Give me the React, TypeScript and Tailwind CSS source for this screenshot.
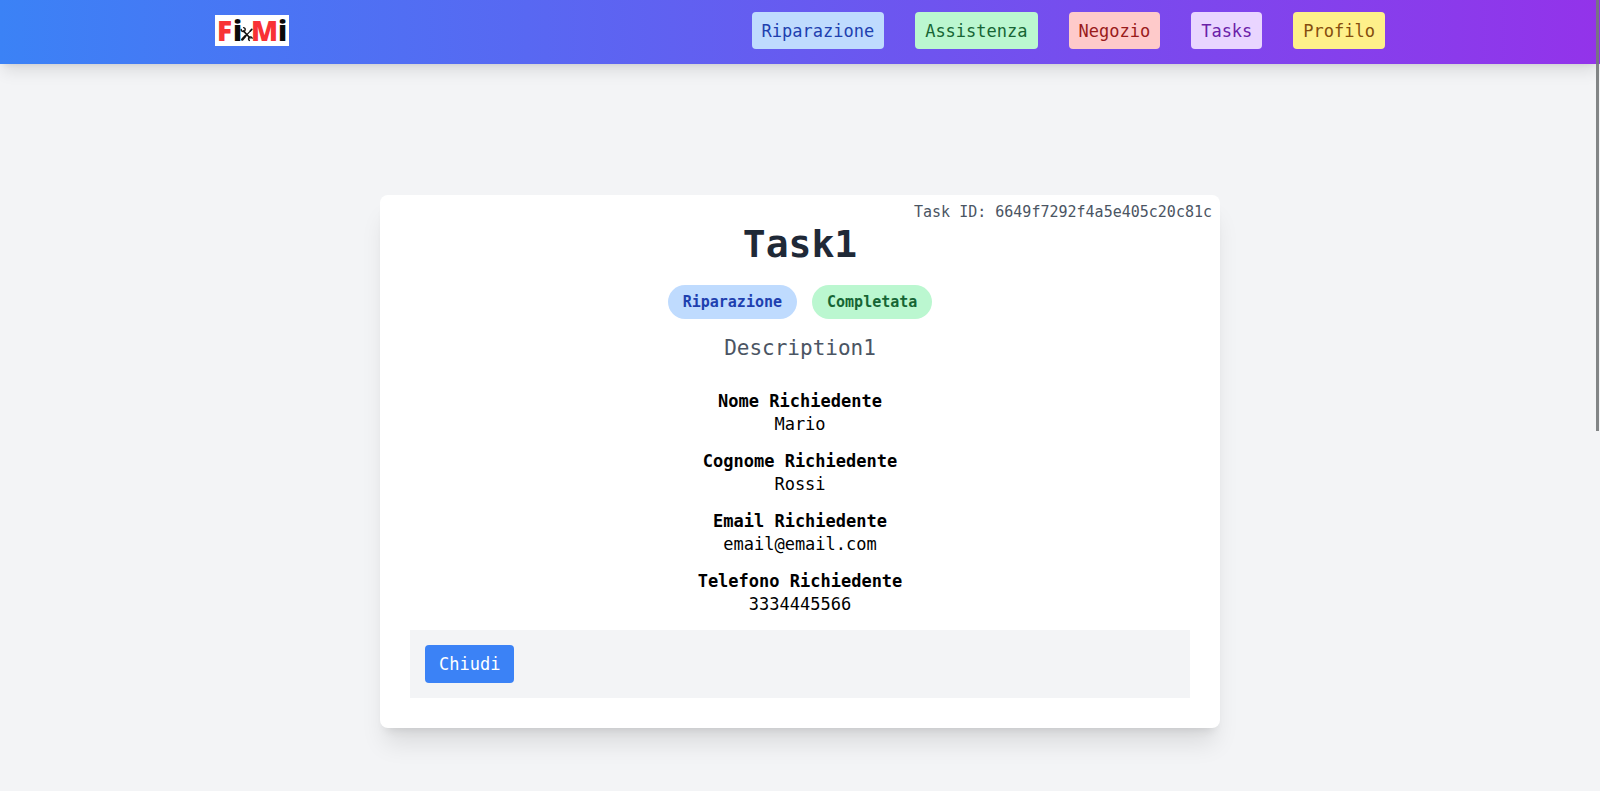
import React from "react";

type NavItem = { label: string; className: string };

const navItems: NavItem[] = [
  { label: "Riparazione", className: "bg-[#bfdbfe] text-[#1e40af]" },
  { label: "Assistenza", className: "bg-[#bbf7d0] text-[#166534]" },
  { label: "Negozio", className: "bg-[#fecaca] text-[#991b1b]" },
  { label: "Tasks", className: "bg-[#e9d5ff] text-[#6b21a8]" },
  { label: "Profilo", className: "bg-[#fef08a] text-[#854d0e]" },
];

const details = [
  { term: "Nome Richiedente", value: "Mario" },
  { term: "Cognome Richiedente", value: "Rossi" },
  { term: "Email Richiedente", value: "email@email.com" },
  { term: "Telefono Richiedente", value: "3334445566" },
];

function Logo() {
  return (
    <svg viewBox="0 0 74 31" className="h-[31px] w-[74px] overflow-visible" role="img" aria-label="FixMi">
      <rect width="74" height="31" fill="#ffffff" />
      <g fontFamily="'Open Sans', sans-serif" fontWeight="800" fontSize="28">
        <text x="2" y="26" fill="#f83135">F</text>
        <text x="18" y="26" fill="#0a0a0a">i</text>
        <text x="36" y="26" fill="#f83135">M</text>
        <text x="63" y="26" fill="#0a0a0a">i</text>
      </g>
      <g stroke="#111111" fill="none" strokeLinecap="round">
        <path d="M28.5 16 L35 23" strokeWidth="1.7" />
        <path d="M35.5 15.8 L31 20.5" strokeWidth="1.1" />
        <path d="M30.4 21 L27.2 24.6" strokeWidth="2.4" />
        <path d="M26.2 14.4 A2 2 0 1 0 28.6 12.6" strokeWidth="1.4" />
        <path d="M34.4 25.4 A1.9 1.9 0 1 1 37.2 23.2" strokeWidth="1.4" />
        <path d="M35.4 15.8 L36.8 14.4" strokeWidth="1.7" />
      </g>
    </svg>
  );
}

export default function App() {
  return (
    <div className="relative min-h-screen bg-[#f3f4f6] font-['DejaVu_Sans_Mono',monospace] text-[17px] leading-[23px] text-black">
      <header className="bg-linear-to-r/srgb from-[#3b82f6] to-[#9333ea] shadow-lg">
        <div className="mx-auto flex max-w-[1200px] items-center justify-between px-[15px] pt-3 pb-[15px]">
          <a href="#">
            <Logo />
          </a>
          <nav className="flex gap-[31px]">
            {navItems.map((item) => (
              <a key={item.label} href="#" className={`rounded px-[10px] pt-[9px] pb-[7px] leading-[21px] ${item.className}`}>
                {item.label}
              </a>
            ))}
          </nav>
        </div>
      </header>

      <main className="flex justify-center px-4 pt-[131px]">
        <article className="relative w-full max-w-[840px] rounded-lg bg-white p-[30px] text-center shadow-xl">
          <p className="absolute top-2 right-2 text-[15px] leading-[19px] text-[#4b5563]">
            Task ID: 6649f7292f4a5e405c20c81c
          </p>
          <h1 className="text-[38px] leading-[38px] font-bold text-[#1f2937]">Task1</h1>
          <div className="mt-[22px] flex justify-center gap-[15px] text-[15px] leading-[18px] font-bold">
            <span className="rounded-full bg-[#bfdbfe] px-[15px] py-2 text-[#1e40af]">Riparazione</span>
            <span className="rounded-full bg-[#bbf7d0] px-[15px] py-2 text-[#166534]">Completata</span>
          </div>
          <p className="mt-4 text-[21px] leading-[26px] text-[#4b5563]">Description1</p>
          <dl className="mt-[29px] flex flex-col gap-[14px]">
            {details.map((d) => (
              <div key={d.term}>
                <dt className="font-bold">{d.term}</dt>
                <dd>{d.value}</dd>
              </div>
            ))}
          </dl>
          <div className="mt-[14px] flex bg-[#f3f4f6] p-[15px]">
            <button type="button" className="rounded bg-[#3b82f6] px-[14px] pt-2 pb-[7px] text-white">
              Chiudi
            </button>
          </div>
        </article>
      </main>

      <div aria-hidden="true" className="absolute top-0 right-px h-[431px] w-[3px] bg-[#76797a]/90" />
    </div>
  );
}
